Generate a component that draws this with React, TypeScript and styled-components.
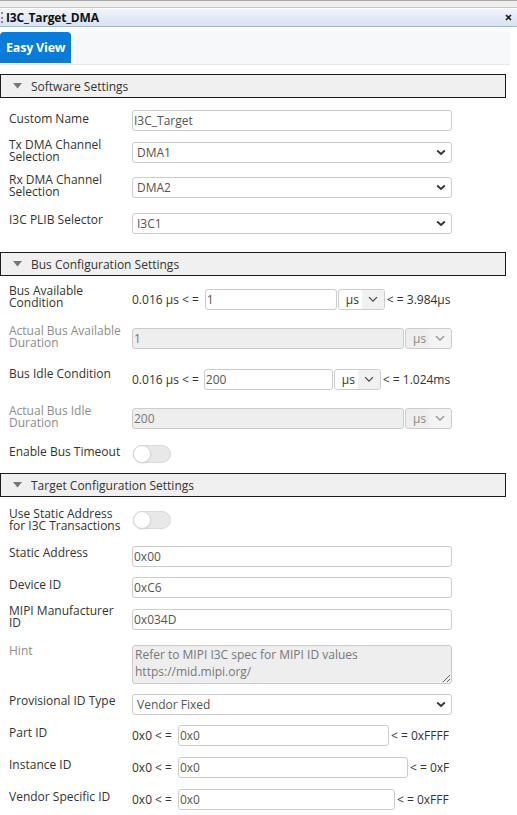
import React from "react";
import styled, { createGlobalStyle } from "styled-components";

const GlobalStyle = createGlobalStyle`
  html, body {
    margin: 0;
    padding: 0;
    background: #fff;
  }
  body {
    font-family: "Open Sans", "Noto Sans", sans-serif;
    font-size: 12px;
    color: #333;
  }
`;

const Window = styled.div`
  width: 517px;
  overflow: hidden;
`;

// Window chrome

const TopStrip = styled.div`
  height: 6px;
  background: #efefef;
  border-top: 1px solid #a9a9a9;
  border-bottom: 1px solid #c6c6c6;
  margin-bottom: 1px;
`;

const TitleBar = styled.div`
  height: 17px;
  display: flex;
  align-items: center;
  padding: 0 5px 0 1px;
  background: linear-gradient(#f0f4fb, #d7e2f3);
  border-bottom: 1px solid #a3b7d6;
`;

const Grip = styled.span`
  width: 0;
  height: 11px;
  border-left: 2px dotted #8a8a8a;
  margin-right: 3px;
`;

const Title = styled.span`
  flex: 1;
  font-weight: 700;
  font-size: 12px;
  color: #111;
  letter-spacing: -0.2px;
`;

const TabBar = styled.div`
  width: 510px;
  height: 33px;
  margin-top: 4px;
  display: flex;
  align-items: flex-end;
  background: #f7f8fa;
  border-bottom: 1px solid #e4e7ec;
`;

const Tab = styled.div<{ $active?: boolean }>`
  height: 31px;
  margin-bottom: 1px;
  padding: 0 6px;
  display: flex;
  align-items: center;
  border-radius: 4px 4px 0 0;
  font-weight: 700;
  font-size: 12.5px;
  letter-spacing: -0.2px;
  color: ${(p) => (p.$active ? "#fff" : "#333")};
  background: ${(p) => (p.$active ? "#0a7bd7" : "transparent")};
`;

const Content = styled.div`
  padding-top: 9px;
`;

// Sections

const SectionHeader = styled.div`
  width: 506px;
  height: 24px;
  box-sizing: border-box;
  display: flex;
  align-items: center;
  gap: 9px;
  padding-left: 12px;
  border: 1px solid #1c1c1c;
  background: #f0f0f0;
  color: #333;
  font-size: 12px;
`;

const SectionBody = styled.div<{ $pb: number }>`
  padding-top: 6px;
  padding-bottom: ${(p) => p.$pb}px;
`;

const Row = styled.div<{ $h: number }>`
  display: grid;
  grid-template-columns: 132px 1fr;
  align-items: center;
  height: ${(p) => p.$h}px;
`;

const Label = styled.div<{ $muted?: boolean; $lift?: number; $top?: boolean }>`
  padding-left: 9px;
  font-size: 12px;
  line-height: 12px;
  color: ${(p) => (p.$muted ? "#8c8c8c" : "#333")};
  margin-bottom: ${(p) => (p.$lift ?? 2) * 2}px;
  align-self: ${(p) => (p.$top ? "start" : "center")};
  margin-top: ${(p) => (p.$top ? "5px" : "0")};
`;

const Controls = styled.div`
  display: flex;
  align-items: center;
`;

const TextInput = styled.input<{ $w?: number }>`
  width: ${(p) => p.$w ?? 320}px;
  height: 21px;
  box-sizing: border-box;
  padding: 0 1px;
  border: 1px solid #ccc;
  border-radius: 3px;
  font-family: "Open Sans", "Noto Sans", sans-serif;
  font-size: 12px;
  color: #555;
  background: #fff;
  outline: none;
  &:disabled {
    background: #eee;
    color: #777;
  }
`;

const SelectBox = styled.div`
  width: 320px;
  height: 21px;
  box-sizing: border-box;
  display: flex;
  align-items: center;
  justify-content: space-between;
  padding: 0 5px 0 4px;
  border: 1px solid #ccc;
  border-radius: 3px;
  color: #555;
  background: #fff;
`;

const Affix = styled.span<{ $gap?: number }>`
  color: #333;
  white-space: nowrap;
  margin-right: ${(p) => p.$gap ?? 0}px;
`;

const After = styled.span`
  color: #333;
  white-space: nowrap;
  margin-left: 2px;
`;

const UnitBox = styled.div<{ $disabled?: boolean }>`
  width: 47px;
  height: 21px;
  box-sizing: border-box;
  display: flex;
  margin-left: 1px;
  border: 1px solid #ccc;
  border-radius: 3px;
  overflow: hidden;
  background: ${(p) => (p.$disabled ? "#eee" : "#fff")};
  color: ${(p) => (p.$disabled ? "#888" : "#333")};
`;

const UnitText = styled.span`
  flex: 1;
  display: flex;
  align-items: center;
  padding-left: 7px;
`;

const UnitArrow = styled.span<{ $disabled?: boolean }>`
  width: 22px;
  display: flex;
  align-items: center;
  justify-content: center;
  background: ${(p) => (p.$disabled ? "#f3f3f3" : "#f1f1f1")};
`;

const Switch = styled.div`
  position: relative;
  width: 38px;
  height: 18px;
  margin-left: 1px;
  box-sizing: border-box;
  border: 1px solid #d9d9d9;
  border-radius: 9px;
  background: #e8e8e8;
`;

const Knob = styled.span`
  position: absolute;
  left: -1px;
  top: -1px;
  width: 18px;
  height: 18px;
  box-sizing: border-box;
  border-radius: 50%;
  background: #fff;
  border: 1px solid #d6d6d6;
  box-shadow: 0 1px 2px rgba(0, 0, 0, 0.08);
`;

const HintArea = styled.textarea`
  width: 320px;
  height: 39px;
  box-sizing: border-box;
  padding: 0 2px;
  border: 1px solid #ccc;
  border-radius: 3px;
  background: #eee;
  color: #777;
  font-family: "Open Sans", "Noto Sans", sans-serif;
  font-size: 12px;
  line-height: 17px;
  overflow: hidden;
  resize: vertical;
  outline: none;
`;

const Caret = () => (
  <svg width="10" height="7" viewBox="0 0 10 7">
    <path d="M1.2 1.5 L5 5 L8.8 1.5" fill="none" stroke="#333" strokeWidth="1.8" />
  </svg>
);

const ThinCaret = ({ color }: { color: string }) => (
  <svg width="10" height="7" viewBox="0 0 10 7">
    <path d="M1 1.2 L5 5.2 L9 1.2" fill="none" stroke={color} strokeWidth="1.2" />
  </svg>
);

const Triangle = () => (
  <svg width="9" height="6" viewBox="0 0 9 6">
    <path d="M0 0 H9 L4.5 5.5 Z" fill="#777" />
  </svg>
);

const CloseIcon = () => (
  <svg width="7" height="7" viewBox="0 0 7 7">
    <path d="M1 1 L6 6 M6 1 L1 6" stroke="#222" strokeWidth="1.7" />
  </svg>
);

const Section = ({ title, pb, children }: { title: string; pb: number; children: React.ReactNode }) => (
  <>
    <SectionHeader>
      <Triangle />
      <span>{title}</span>
    </SectionHeader>
    <SectionBody $pb={pb}>{children}</SectionBody>
  </>
);

const Select = ({ value }: { value: string }) => (
  <SelectBox>
    <span>{value}</span>
    <Caret />
  </SelectBox>
);

const Unit = ({ disabled }: { disabled?: boolean }) => (
  <UnitBox $disabled={disabled}>
    <UnitText>µs</UnitText>
    <UnitArrow $disabled={disabled}>
      <ThinCaret color={disabled ? "#888" : "#444"} />
    </UnitArrow>
  </UnitBox>
);

const Toggle = () => (
  <Switch>
    <Knob />
  </Switch>
);

export default function App() {
  return (
    <Window>
      <GlobalStyle />
      <TopStrip />
      <TitleBar>
        <Grip />
        <Title>I3C_Target_DMA</Title>
        <CloseIcon />
      </TitleBar>
      <TabBar>
        <Tab $active>Easy View</Tab>
      </TabBar>

      <Content>
        <Section title="Software Settings" pb={12}>
          <Row $h={32}>
            <Label $lift={1}>Custom Name</Label>
            <Controls>
              <TextInput defaultValue="I3C_Target" />
            </Controls>
          </Row>
          <Row $h={32}>
            <Label $lift={1}>
              Tx DMA Channel
              <br />
              Selection
            </Label>
            <Controls>
              <Select value="DMA1" />
            </Controls>
          </Row>
          <Row $h={38}>
            <Label $lift={1}>
              Rx DMA Channel
              <br />
              Selection
            </Label>
            <Controls>
              <Select value="DMA2" />
            </Controls>
          </Row>
          <Row $h={34}>
            <Label $lift={3}>I3C PLIB Selector</Label>
            <Controls>
              <Select value="I3C1" />
            </Controls>
          </Row>
        </Section>

        <Section title="Bus Configuration Settings" pb={2}>
          <Row $h={35}>
            <Label $lift={3}>
              Bus Available
              <br />
              Condition
            </Label>
            <Controls>
              <Affix $gap={6}>0.016 µs &lt; =</Affix>
              <TextInput $w={132} defaultValue="1" />
              <Unit />
              <After>&lt; = 3.984µs</After>
            </Controls>
          </Row>
          <Row $h={42}>
            <Label $muted $lift={1.5}>
              Actual Bus Available
              <br />
              Duration
            </Label>
            <Controls>
              <TextInput $w={272} disabled defaultValue="1" />
              <Unit disabled />
            </Controls>
          </Row>
          <Row $h={41}>
            <Label $lift={5.5}>Bus Idle Condition</Label>
            <Controls>
              <Affix $gap={5}>0.016 µs &lt; =</Affix>
              <TextInput $w={129} defaultValue="200" />
              <Unit />
              <After>&lt; = 1.024ms</After>
            </Controls>
          </Row>
          <Row $h={37}>
            <Label $muted>
              Actual Bus Idle
              <br />
              Duration
            </Label>
            <Controls>
              <TextInput $w={272} disabled defaultValue="200" />
              <Unit disabled />
            </Controls>
          </Row>
          <Row $h={34}>
            <Label>Enable Bus Timeout</Label>
            <Controls>
              <Toggle />
            </Controls>
          </Row>
        </Section>

        <Section title="Target Configuration Settings" pb={0}>
          <Row $h={33}>
            <Label $lift={0}>
              Use Static Address
              <br />
              for I3C Transactions
            </Label>
            <Controls>
              <Toggle />
            </Controls>
          </Row>
          <Row $h={40}>
            <Label $lift={3}>Static Address</Label>
            <Controls>
              <TextInput defaultValue="0x00" />
            </Controls>
          </Row>
          <Row $h={22}>
            <Label>Device ID</Label>
            <Controls>
              <TextInput defaultValue="0xC6" />
            </Controls>
          </Row>
          <Row $h={42}>
            <Label>
              MIPI Manufacturer
              <br />
              ID
            </Label>
            <Controls>
              <TextInput defaultValue="0x034D" />
            </Controls>
          </Row>
          <Row $h={48}>
            <Label $muted $top>
              Hint
            </Label>
            <Controls>
              <HintArea
                readOnly
                defaultValue={"Refer to MIPI I3C spec for MIPI ID values\nhttps://mid.mipi.org/"}
              />
            </Controls>
          </Row>
          <Row $h={32}>
            <Label $lift={3}>Provisional ID Type</Label>
            <Controls>
              <Select value="Vendor Fixed" />
            </Controls>
          </Row>
          <Row $h={30}>
            <Label>Part ID</Label>
            <Controls>
              <Affix $gap={6}>0x0 &lt; =</Affix>
              <TextInput $w={211} defaultValue="0x0" />
              <After>&lt; = 0xFFFF</After>
            </Controls>
          </Row>
          <Row $h={35}>
            <Label $lift={2.5}>Instance ID</Label>
            <Controls>
              <Affix $gap={6}>0x0 &lt; =</Affix>
              <TextInput $w={230} defaultValue="0x0" />
              <After>&lt; = 0xF</After>
            </Controls>
          </Row>
          <Row $h={28}>
            <Label>Vendor Specific ID</Label>
            <Controls>
              <Affix $gap={6}>0x0 &lt; =</Affix>
              <TextInput $w={217} defaultValue="0x0" />
              <After>&lt; = 0xFFF</After>
            </Controls>
          </Row>
        </Section>
      </Content>
    </Window>
  );
}
